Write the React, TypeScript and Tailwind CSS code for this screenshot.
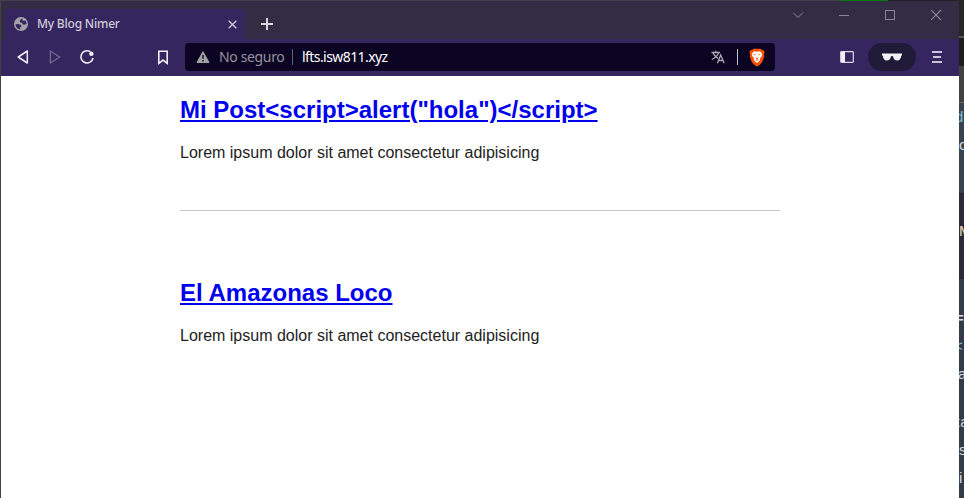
import React from "react";

const posts = [
  { title: 'Mi Post<script>alert("hola")</script>', text: "Lorem ipsum dolor sit amet consectetur adipisicing" },
  { title: "El Amazonas Loco", text: "Lorem ipsum dolor sit amet consectetur adipisicing" },
];

function TitleBar() {
  return (
    <div className="flex h-[38px] items-end bg-[#322d45]">
      <div className="ml-1 flex h-[30px] w-[240px] items-center rounded-t-[3px] bg-[#35265f] pl-[9px]">
        <svg className="size-[14px] shrink-0" viewBox="0 0 14 14">
          <circle cx="7" cy="7" r="7" fill="#a3a2a9" />
          <path d="M8.6 1.5 6.6 2.6 5.6 4 6.4 5.4 8 5.8 8.6 7.3 10.2 7.8 12.6 7A5.6 5.6 0 0 0 11.3 3.5L9.6 4.1 8.4 3.2ZM1.5 7.2 4.2 7 6.6 7.8 7.7 9.2 6.8 10.2 5.6 10.6 6.6 12.5A5.6 5.6 0 0 1 1.5 7.2Z" fill="#35265f" />
        </svg>
        <span className="ml-[9px] w-[191px] whitespace-nowrap text-[12px] font-medium leading-[16px] tracking-[-0.2px] text-[#d0ccd9]">My Blog Nimer</span>
        <svg className="size-[9px] shrink-0" viewBox="0 0 9 9"><path d="M.7.7 8.3 8.3M8.3.7.7 8.3" stroke="#cbc5d8" strokeWidth="1.4" /></svg>
      </div>
      <svg className="mb-[9px] ml-4 size-3" viewBox="0 0 12 12"><path d="M6 0V12M0 6H12" stroke="#d7d5dc" strokeWidth="2" /></svg>
      <div className="ml-auto mr-[17px] flex h-[38px] items-start gap-[35px] pt-2 text-[#88849a]">
        <svg className="size-[11px]" viewBox="0 0 11 11" fill="none" stroke="currentColor"><path d="M0 3.5 5 8.5 10 3.5" /></svg>
        <svg className="size-[11px]" viewBox="0 0 11 11" stroke="currentColor"><path d="M0 6.5H10" /></svg>
        <svg className="size-[11px]" viewBox="0 0 11 11" fill="none" stroke="currentColor"><rect x=".5" y="1.5" width="9" height="9" /></svg>
        <svg className="size-[11px]" viewBox="0 0 11 11" stroke="currentColor"><path d="M0 1 10 11M10 1 0 11" strokeWidth="1.1" /></svg>
      </div>
    </div>
  );
}

function AddressBar() {
  return (
    <div className="ml-4 flex h-7 w-[590px] shrink-0 items-center rounded bg-[#0b0523] pl-[11px]">
      <svg className="size-[14px] shrink-0" viewBox="0 0 14 14">
        <path d="M7 2 12.8 12.3H1.2Z" fill="#a2a2a5" stroke="#a2a2a5" strokeWidth="1.2" strokeLinejoin="round" />
        <path d="M7 5V8.7M7 10V11.5" stroke="#19132d" strokeWidth="1.5" />
      </svg>
      <span className="ml-[9px] w-[73px] whitespace-nowrap text-[14px] leading-5 tracking-[-0.35px] text-[#96939f]">No seguro</span>
      <i className="h-4 w-px bg-[#646073]" />
      <span className="ml-[9px] w-[409px] whitespace-nowrap text-[14px] leading-5 tracking-[-0.57px] text-white">lfts.isw811.xyz</span>
      <svg className="size-[14px] shrink-0" viewBox="0 0 14 14" fill="none" stroke="#aaa7b2" strokeWidth="1.3">
        <path d="M.5 2.5H9M4.8.7V2.5M2 2.8C3 5.7 5 7.3 7 8.3M7.5 2.8C6.8 5.4 3.8 8 .8 9.5M6.4 13.2 9.7 5 13.2 13.2M7.5 10.5H12" />
      </svg>
      <i className="ml-3 h-4 w-px bg-[#c1bfc7]" />
      <svg className="ml-[11px] h-[19px] w-4 shrink-0" viewBox="0 0 16 19">
        <path d="M4.4.7H11.6L12.8 2 14.7 2.2 15.6 4.5 15 6.2 15.2 8.6 13.2 14.1 11.1 16.4 8 18.5 4.9 16.4 2.8 14.1.8 8.6 1 6.2.4 4.5 1.3 2.2 3.2 2Z" fill="#ff5000" />
        <path d="M5 3.2 8 3.7 11 3.2 13.2 5.8 12.6 8.3 10.8 10.7 11 12.5 8 14.9 5 12.5 5.2 10.7 3.4 8.3 2.8 5.8Z" fill="#fff" />
        <path d="M4.2 6.1 6.9 6.5 6.1 7.5ZM11.8 6.1 9.1 6.5 9.9 7.5ZM6.3 9.2 8 10.1 9.7 9.2 8.5 10.9V11.7L10.2 12.2 8 12.6 5.8 12.2 7.5 11.7V10.9Z" fill="#ff5000" />
      </svg>
    </div>
  );
}

function Toolbar() {
  return (
    <div className="flex h-[37px] items-center bg-[#35265f] pb-px text-[#f0edf5]">
      <svg className="ml-4 h-[14px] w-3" viewBox="0 0 12 14" fill="none" stroke="currentColor" strokeWidth="1.5" strokeLinejoin="round"><path d="M10.3 1V13L1.2 7Z" /></svg>
      <svg className="ml-5 h-[14px] w-3" viewBox="0 0 12 14" fill="none" stroke="#736891" strokeWidth="1.4" strokeLinejoin="round"><path d="M1.4 1V13L10.7 7Z" /></svg>
      <svg className="ml-[18px] size-4" viewBox="0 0 16 16" fill="none" stroke="currentColor" strokeWidth="1.6">
        <path d="M11.3 2.7A6.1 6.1 0 1 0 14 9" /><circle cx="12.4" cy="4.7" r="2.2" fill="currentColor" stroke="none" />
      </svg>
      <svg className="ml-[62px] h-[15px] w-3" viewBox="0 0 12 15" fill="none" stroke="currentColor" strokeWidth="1.6"><path d="M1.8 1.3H10.2V13.3L6 10.1 1.8 13.3Z" /></svg>
      <AddressBar />
      <svg className="ml-[65px] h-3 w-[14px]" viewBox="0 0 14 12" fill="none" stroke="#dcd7e7" strokeWidth="1.2"><rect x=".7" y=".7" width="12.6" height="10.6" rx=".7" /><path d="M1 1H5V11H1Z" fill="currentColor" stroke="none" /></svg>
      <div className="ml-[14px] flex h-7 w-12 items-center justify-center rounded-full bg-[#1f1a38]">
        <svg className="h-2 w-5" viewBox="0 0 20 8"><path d="M0 .5H20V2.2L19.2 2.8C18.9 6 17.6 7.5 15.3 7.5C12.8 7.5 11.4 6 11 3.2Q10 2.7 9 3.2C8.6 6 7.2 7.5 4.7 7.5C2.4 7.5 1.1 6 .8 2.8L0 2.2Z" fill="#f2f1f3" /></svg>
      </div>
      <svg className="ml-4 h-3 w-[10px]" viewBox="0 0 10 12" stroke="#c9c2d8" strokeWidth="2"><path d="M0 1H10M1 6H9M0 11H10" /></svg>
    </div>
  );
}

function EditorStrip() {
  return (
    <aside className="flex w-[5px] flex-col overflow-hidden bg-[#343b48] font-['Liberation_Sans'] text-[15px] text-[#d8dade]">
      <div className="h-[38px] shrink-0 border-b-2 border-[#555] bg-[#272727]" />
      <div className="h-[28px] shrink-0 bg-[#1d1d1d]" />
      <div className="h-[37px] shrink-0 border-b border-[#666967] bg-[#414341]" />
      <div className="flex h-[90px] shrink-0 flex-col bg-[#394350] leading-7">
        <span className="-ml-[4px] text-[#80bddd]">d</span><span>c</span>
      </div>
      <div className="h-[86px] shrink-0 border-y border-[#20232b] bg-[#292c36] pt-[23px] leading-7 text-[#f0d4b6]">M</div>
      <div className="flex flex-col pt-[25px] leading-7">
        <span className="-ml-[4px] font-bold">=</span><span className="-ml-[5px] text-[#80bddd]">&lt;</span><span className="-ml-px">a</span>
        <span className="-ml-[3px] mt-5 whitespace-nowrap"><b className="font-normal text-[#80bddd]">t</b>a</span><span>s</span><span>i</span>
      </div>
    </aside>
  );
}

export default function App() {
  return (
    <div className="flex h-[498px] w-[964px] overflow-hidden border-l border-[#414143] font-['Noto_Sans','Open_Sans',sans-serif]">
      <div className="flex w-[958px] shrink-0 flex-col bg-white">
        <div className="flex h-px bg-[#42404e]">
          <i className="ml-[839px] w-12 bg-[#087b0b]" /><i className="flex-1 bg-[#202123]" />
        </div>
        <TitleBar />
        <Toolbar />
        <main className="mx-auto w-[600px] font-['Liberation_Sans',Arial,sans-serif]">
          {posts.map((post, index) => (
            <article key={post.title} className={index === 0 ? "h-[135px] border-b border-[#c5c5c5] pt-5" : "pt-[68px]"}>
              <h1 className="text-[24px] font-bold leading-7 text-[#0000ee]"><a className="whitespace-nowrap underline" href="#post">{post.title}</a></h1>
              <p className="mt-4 text-[16px] leading-[26px] text-[#222]">{post.text}</p>
            </article>
          ))}
        </main>
      </div>
      <EditorStrip />
    </div>
  );
}
